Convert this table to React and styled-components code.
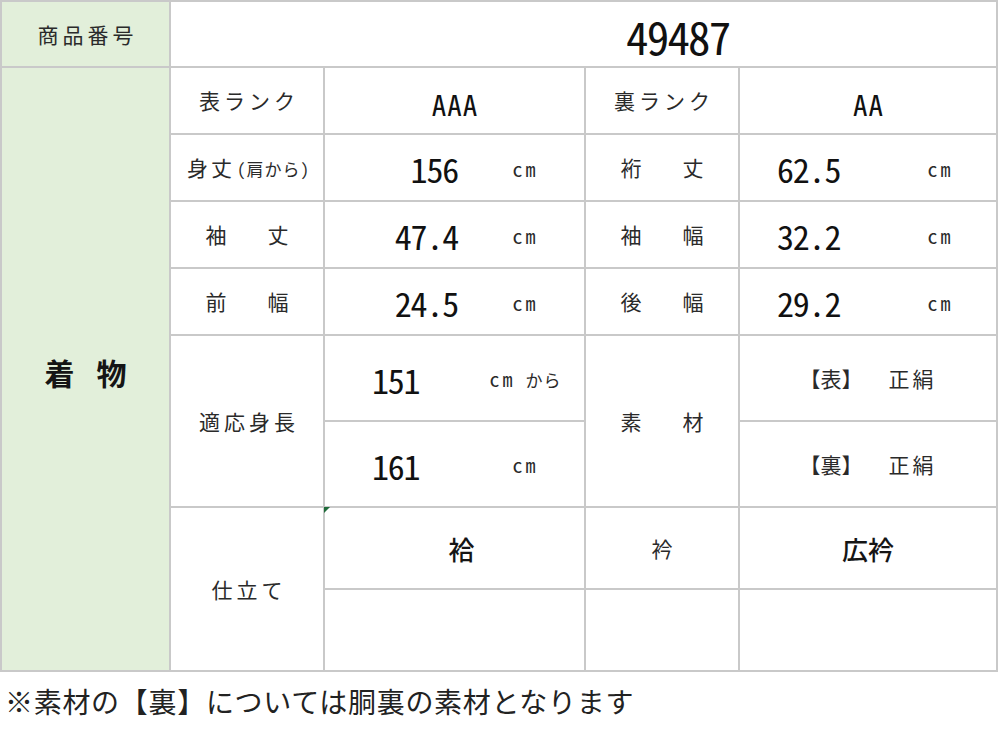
import React from "react";
import styled, { createGlobalStyle } from "styled-components";

const GlobalStyle = createGlobalStyle`
  html, body { margin: 0; padding: 0; background: #ffffff; }
  body { font-family: "Noto Sans CJK JP", "Noto Sans", sans-serif; color: #222; }
`;

const Page = styled.div`
  width: 1000px;
  height: 729px;
  overflow: hidden;
  background: #fff;
`;

const Table = styled.div`
  display: grid;
  width: 998px;
  grid-template-columns: 167px 152px 259px 152px 256px;
  grid-template-rows: 64px 65px 65px 65px 65px 84px 84px 80px 80px;
  gap: 2px;
  padding: 2px;
  box-sizing: border-box;
  background: #c9c9c9;
`;

const Cell = styled.div`
  position: relative;
  background: ${(p) => (p.$green ? "#e2efda" : "#ffffff")};
  grid-column: span ${(p) => p.$colSpan || 1};
  grid-row: span ${(p) => p.$rowSpan || 1};
  display: flex;
  align-items: center;
  justify-content: center;
  box-sizing: border-box;
  min-width: 0;
`;

const Label = styled.span`
  font-family: "Noto Sans CJK JP", sans-serif;
  font-size: 21px;
  font-weight: 400;
  letter-spacing: ${(p) => p.$spacing || "4px"};
  margin-right: calc(-1 * ${(p) => p.$spacing || "4px"});
  color: #2a2a2a;
  white-space: pre;
  line-height: 1;
`;

const SmallLabel = styled.span`
  font-size: 17px;
  letter-spacing: 1px;
  margin-left: 2px;
  font-feature-settings: "hwid";
`;

const HeadLabel = styled.span`
  font-family: "Noto Sans CJK JP", sans-serif;
  font-size: 30px;
  font-weight: 700;
  color: #151515;
  display: flex;
  gap: 22px;
  line-height: 1;
  margin-top: 6px;
`;

const ProductNo = styled(Cell)`
  justify-content: flex-start;
  padding-left: 455px;
`;

const BigNumber = styled.span`
  font-family: "Noto Sans CJK JP", sans-serif;
  font-feature-settings: "hwid";
  font-size: 45px;
  letter-spacing: -1.8px;
  font-weight: 400;
  color: #111;
  line-height: 1;
  margin-top: 2px;
`;

const Rank = styled.span`
  font-family: "Noto Sans CJK JP", sans-serif;
  font-feature-settings: "hwid";
  font-size: 29px;
  letter-spacing: 1px;
  margin-right: -1px;
  font-weight: 400;
  color: #111;
  line-height: 1;
  margin-top: 6px;
`;

const ValueCell = styled(Cell)`
  display: grid;
  grid-template-columns: ${(p) => p.$cols};
  align-items: center;
  justify-content: stretch;
`;

const Num = styled.span`
  font-family: "Noto Sans CJK JP", sans-serif;
  font-feature-settings: "hwid";
  font-size: 34px;
  letter-spacing: -1.2px;
  font-weight: 400;
  color: #111;
  line-height: 1;
  justify-self: ${(p) => p.$align || "end"};
  padding-left: ${(p) => p.$padLeft || "0px"};
  padding-right: ${(p) => p.$padRight || "0px"};
  margin-top: 3px;
  white-space: pre;
`;

const Unit = styled.span`
  font-family: "Noto Sans CJK JP", sans-serif;
  font-feature-settings: "hwid";
  font-size: 20px;
  letter-spacing: 3px;
  color: #2a2a2a;
  justify-self: center;
  line-height: 1;
  margin-top: 2px;
  white-space: pre;
`;

const UnitSuffix = styled.span`
  font-size: 17px;
  letter-spacing: 1px;
  margin-left: 10px;
`;

const Material = styled.div`
  display: flex;
  align-items: center;
  gap: 26px;
  font-family: "Noto Sans CJK JP", sans-serif;
  font-size: 21px;
  color: #2a2a2a;
  line-height: 1;
`;

const Bracket = styled.span`
  letter-spacing: 0;
`;

const MaterialName = styled.span`
  letter-spacing: 3px;
`;

const BoldValue = styled.span`
  font-family: "Noto Sans CJK JP", sans-serif;
  font-size: 26px;
  font-weight: 500;
  color: #151515;
  line-height: 1;
  margin-left: ${(p) => p.$shift || "0px"};
  margin-top: 2px;
`;

const Marker = styled.span`
  position: absolute;
  left: -1px;
  top: -1px;
  width: 0;
  height: 0;
  border-top: 6px solid #1f6b3a;
  border-right: 6px solid transparent;
`;

const Footer = styled.p`
  margin: 11px 0 0 0;
  padding-left: 5px;
  font-family: "Noto Sans CJK JP", sans-serif;
  font-size: 28px;
  line-height: 36px;
  color: #222;
  letter-spacing: 0.7px;
  font-weight: 400;
`;

const sizeRows = [
  { l: "身丈", small: "(肩から)", v: "156", r: "裄\u3000丈", rv: "62.5" },
  { l: "袖\u3000丈", v: "47.4", r: "袖\u3000幅", rv: "32.2" },
  { l: "前\u3000幅", v: "24.5", r: "後\u3000幅", rv: "29.2" },
];

const LEFT_COLS = "142px 1fr";
const RIGHT_COLS = "145px 1fr";

export default function App() {
  return (
    <Page>
      <GlobalStyle />
      <Table>
        <Cell $green>
          <Label>商品番号</Label>
        </Cell>
        <ProductNo $colSpan={4}>
          <BigNumber>49487</BigNumber>
        </ProductNo>

        <Cell $green $rowSpan={8}>
          <HeadLabel>
            <span>着</span>
            <span>物</span>
          </HeadLabel>
        </Cell>
        <Cell>
          <Label>表ランク</Label>
        </Cell>
        <Cell>
          <Rank>AAA</Rank>
        </Cell>
        <Cell>
          <Label>裏ランク</Label>
        </Cell>
        <Cell>
          <Rank>AA</Rank>
        </Cell>

        {sizeRows.map((row) => (
          <React.Fragment key={row.l}>
            <Cell>
              <Label $spacing={row.small ? "3px" : "10px"}>
                {row.l}
                {row.small && <SmallLabel>{row.small}</SmallLabel>}
              </Label>
            </Cell>
            <ValueCell $cols={LEFT_COLS}>
              <Num $padRight="9px">{row.v}</Num>
              <Unit>cm</Unit>
            </ValueCell>
            <Cell>
              <Label $spacing="10px">{row.r}</Label>
            </Cell>
            <ValueCell $cols={RIGHT_COLS}>
              <Num $align="start" $padLeft="37px">
                {row.rv}
              </Num>
              <Unit>cm</Unit>
            </ValueCell>
          </React.Fragment>
        ))}

        <Cell $rowSpan={2}>
          <Label $spacing="4px">適応身長</Label>
        </Cell>
        <ValueCell $cols={LEFT_COLS}>
          <Num $align="start" $padLeft="47px">151</Num>
          <Unit>
            cm<UnitSuffix>から</UnitSuffix>
          </Unit>
        </ValueCell>
        <Cell $rowSpan={2}>
          <Label $spacing="10px">素{"\u3000"}材</Label>
        </Cell>
        <Cell>
          <Material>
            <Bracket>【表】</Bracket>
            <MaterialName>正絹</MaterialName>
          </Material>
        </Cell>
        <ValueCell $cols={LEFT_COLS}>
          <Num $align="start" $padLeft="47px">161</Num>
          <Unit>cm</Unit>
        </ValueCell>
        <Cell>
          <Material>
            <Bracket>【裏】</Bracket>
            <MaterialName>正絹</MaterialName>
          </Material>
        </Cell>

        <Cell $rowSpan={2}>
          <Label $spacing="4px">仕立て</Label>
        </Cell>
        <Cell>
          <Marker />
          <BoldValue $shift="14px">袷</BoldValue>
        </Cell>
        <Cell>
          <Label>衿</Label>
        </Cell>
        <Cell>
          <BoldValue>広衿</BoldValue>
        </Cell>
        <Cell />
        <Cell />
        <Cell />
      </Table>
      <Footer>※素材の【裏】については胴裏の素材となります</Footer>
    </Page>
  );
}
